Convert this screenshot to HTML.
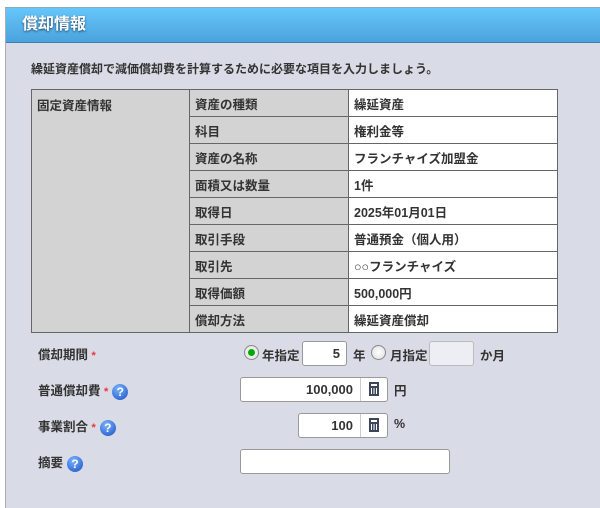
<!DOCTYPE html>
<html><head><meta charset="utf-8"><style>
body{margin:0;background:#fff;width:600px;height:499px;overflow:hidden;font-family:"Liberation Sans","Noto Sans CJK JP",sans-serif;color:#333;font-size:12px;font-weight:bold}
.panel{position:absolute;left:5px;top:7px;width:600px;height:500px;background:#d9dce6;border-left:1px solid #aab;border-top:1px solid #8ab}
.hd{height:34px;background:linear-gradient(#66c6fb,#4aa3dc);border-bottom:1px solid #3a7fb0;color:#fff;font-size:16px;line-height:34px;padding-left:16px;text-shadow:0 1px 2px #246}
.desc{position:absolute;left:25px;top:52px;font-size:12px}
table{position:absolute;left:25px;top:81px;border-collapse:collapse}
td{border:1.5px solid #666;height:26px;padding:0 0 0 5px;vertical-align:middle;font-size:12.5px}
td.a{background:#d3d3d3;width:152px;vertical-align:top;padding-top:5px}
td.b{background:#d3d3d3;width:153px}
td.c{background:#fff;width:203px}
.lbl{position:absolute;left:32px;font-size:12.5px}
.req{color:#e33;font-size:11px}
.q{display:inline-block;width:16px;height:16px;border-radius:50%;background:radial-gradient(circle at 40% 30%,#7ab4ff,#1a4fc0);color:#fff;font-size:12px;text-align:center;line-height:16px;vertical-align:middle;margin-left:4px}
.inp{position:absolute;background:#fff;border:1px solid #999;border-radius:3px;height:25px;box-sizing:border-box;text-align:right;line-height:23px;padding-right:6px;font-size:13px;font-weight:bold}
.calc{position:absolute;right:0;top:0;width:26px;height:23px;border-left:1px solid #ccc}
.calc i{position:absolute;left:8px;top:4px;width:10px;height:14px;background:#3d4658}
.calc i:before{content:"";position:absolute;left:2px;top:2px;width:6px;height:2px;background:#fff}
.calc i:after{content:"";position:absolute;left:2px;top:6px;width:6px;height:6px;background:repeating-linear-gradient(90deg,#fff 0 1px,#3d4658 1px 2.5px);}
.t{position:absolute;font-size:12.5px}
.radio{position:absolute;width:15px;height:15px;border-radius:50%;border:1px solid #888;background:radial-gradient(#fff,#ddd);box-sizing:border-box}
</style></head><body>
<div class="panel">
<div class="hd">償却情報</div>
<div class="desc">繰延資産償却で減価償却費を計算するために必要な項目を入力しましょう。</div>
<table>
<tr><td class="a" rowspan="9">固定資産情報</td><td class="b">資産の種類</td><td class="c">繰延資産</td></tr>
<tr><td class="b">科目</td><td class="c">権利金等</td></tr>
<tr><td class="b">資産の名称</td><td class="c">フランチャイズ加盟金</td></tr>
<tr><td class="b">面積又は数量</td><td class="c">1件</td></tr>
<tr><td class="b">取得日</td><td class="c">2025年01月01日</td></tr>
<tr><td class="b">取引手段</td><td class="c">普通預金（個人用）</td></tr>
<tr><td class="b">取引先</td><td class="c">○○フランチャイズ</td></tr>
<tr><td class="b">取得価額</td><td class="c">500,000円</td></tr>
<tr><td class="b">償却方法</td><td class="c">繰延資産償却</td></tr>
</table>
</div>
<div class="lbl" style="top:344px;left:38px">償却期間 <span class="req">*</span></div>
<div class="lbl" style="top:380px;left:38px">普通償却費 <span class="req">*</span><span class="q">?</span></div>
<div class="lbl" style="top:416px;left:38px">事業割合 <span class="req">*</span><span class="q">?</span></div>
<div class="lbl" style="top:452px;left:38px">摘要<span class="q">?</span></div>
<div class="radio" style="left:244px;top:345px;border-color:#888"><div style="position:absolute;left:3px;top:3px;width:7px;height:7px;border-radius:50%;background:#0a0"></div></div>
<div class="t" style="left:262px;top:345px">年指定</div>
<div class="inp" style="left:302px;top:341px;width:45px">5</div>
<div class="t" style="left:353px;top:345px">年</div>
<div class="radio" style="left:371px;top:345px"></div>
<div class="t" style="left:390px;top:345px">月指定</div>
<div class="inp" style="left:429px;top:341px;width:45px;background:#eceef3;border-color:#bbb"></div>
<div class="t" style="left:480px;top:345px">か月</div>
<div class="inp" style="left:240px;top:377px;width:148px;padding-right:34px">100,000<div class="calc"><i></i></div></div>
<div class="t" style="left:394px;top:380px">円</div>
<div class="inp" style="left:298px;top:413px;width:90px;padding-right:34px">100<div class="calc"><i></i></div></div>
<div class="t" style="left:394px;top:417px">%</div>
<div class="inp" style="left:240px;top:449px;width:210px"></div>
</body></html>
